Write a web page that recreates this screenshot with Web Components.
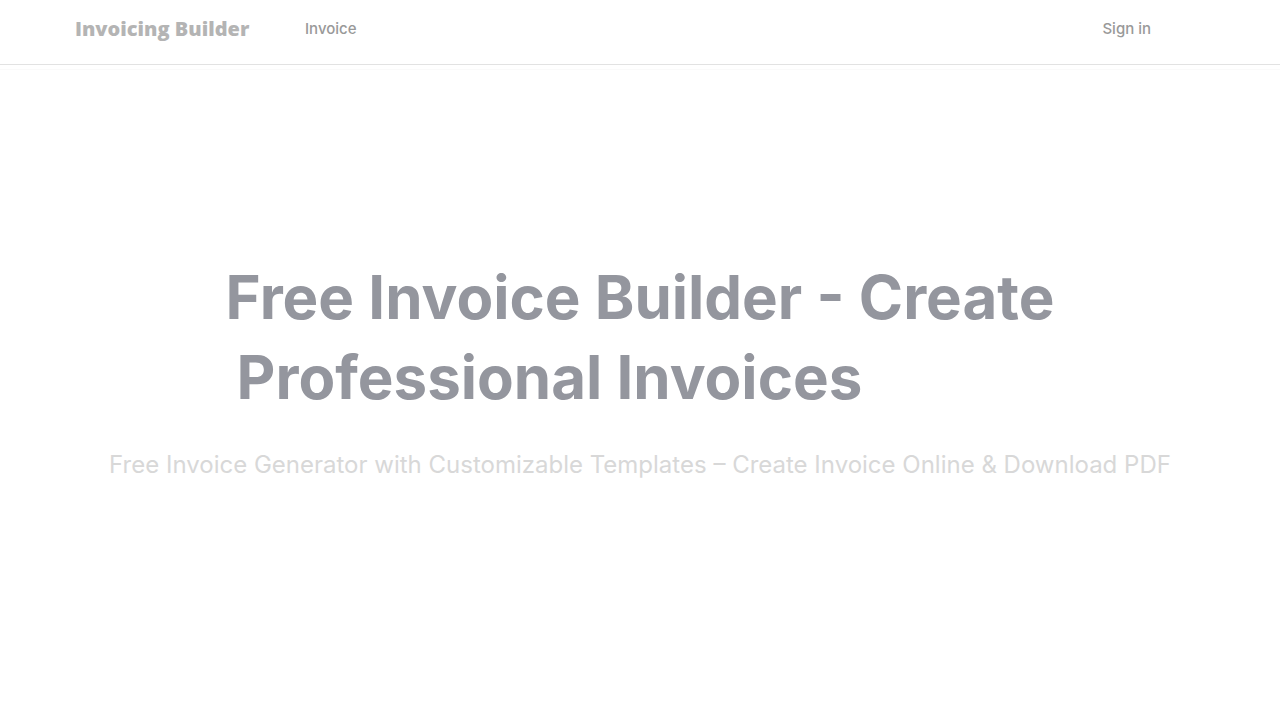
<!DOCTYPE html>
<html lang="en">
<head>
<meta charset="utf-8">
<meta name="viewport" content="width=device-width, initial-scale=1">
<title>Invoicing Builder</title>
<style>
  body { margin: 0; background: #fff; font-family: Inter, "Liberation Sans", sans-serif; }
</style>
</head>
<body>
<invoice-page></invoice-page>
<script>
class SiteHeader extends HTMLElement {
  constructor() {
    super();
    this.attachShadow({ mode: "open" }).innerHTML = `
      <style>
        :host { display: block; border-bottom: 1px solid #e2e2e2; box-shadow: 0 4px 0 #fff, 0 5px 0 #fafafa; }
        header { box-sizing: border-box; max-width: 1280px; height: 64px; margin: 0 auto; padding: 0 129px 6px 75px; display: flex; align-items: center; }
        nav { flex: 1; margin-left: 60px; }
      </style>
      <header>
        <slot name="brand"></slot>
        <nav><slot></slot></nav>
        <slot name="account"></slot>
      </header>`;
  }
}
class BrandName extends HTMLElement {
  constructor() {
    super();
    this.attachShadow({ mode: "open" }).innerHTML = `
      <style>
        :host { display: block; width: 170px; }
        a { display: block; color: #b4b4b4; font: 800 20px/28px "Open Sans", sans-serif; text-decoration: none; white-space: nowrap; }
      </style>
      <a href="#"><slot></slot></a>`;
  }
}
class NavLink extends HTMLElement {
  constructor() {
    super();
    this.attachShadow({ mode: "open" }).innerHTML = `
      <style>
        :host { display: block; }
        a { display: block; color: #999; font-size: 15px; line-height: 20px; font-weight: 500; text-decoration: none; }
      </style>
      <a href="#"><slot></slot></a>`;
  }
}
class HeroBanner extends HTMLElement {
  constructor() {
    super();
    this.attachShadow({ mode: "open" }).innerHTML = `
      <style>
        :host { display: flex; flex: 1; flex-direction: column; align-items: center; justify-content: center; padding: 0 32px 46px; }
        h1 { margin: 0; display: grid; font-size: 60px; line-height: 80px; font-weight: 700; color: #94969e; }
        p { margin: 30px 0 0; font-size: 24px; line-height: 36px; color: #d8d8d8; text-align: center; }
      </style>
      <h1><slot name="title"></slot></h1>
      <p><slot></slot></p>`;
  }
}
class InvoicePage extends HTMLElement {
  constructor() {
    super();
    this.attachShadow({ mode: "open" }).innerHTML = `
      <style>
        :host { display: flex; flex-direction: column; min-height: 100vh; }
        .second { padding-left: 11px; }
      </style>
      <site-header>
        <brand-name slot="brand">Invoicing Builder</brand-name>
        <nav-link>Invoice</nav-link>
        <nav-link slot="account">Sign in</nav-link>
      </site-header>
      <hero-banner>
        <span slot="title">Free Invoice Builder - Create</span>
        <span slot="title" class="second">Professional Invoices</span>
        Free Invoice Generator with Customizable Templates – Create Invoice Online &amp; Download PDF
      </hero-banner>`;
  }
}
customElements.define("site-header", SiteHeader);
customElements.define("brand-name", BrandName);
customElements.define("nav-link", NavLink);
customElements.define("hero-banner", HeroBanner);
customElements.define("invoice-page", InvoicePage);
</script>
</body>
</html>
